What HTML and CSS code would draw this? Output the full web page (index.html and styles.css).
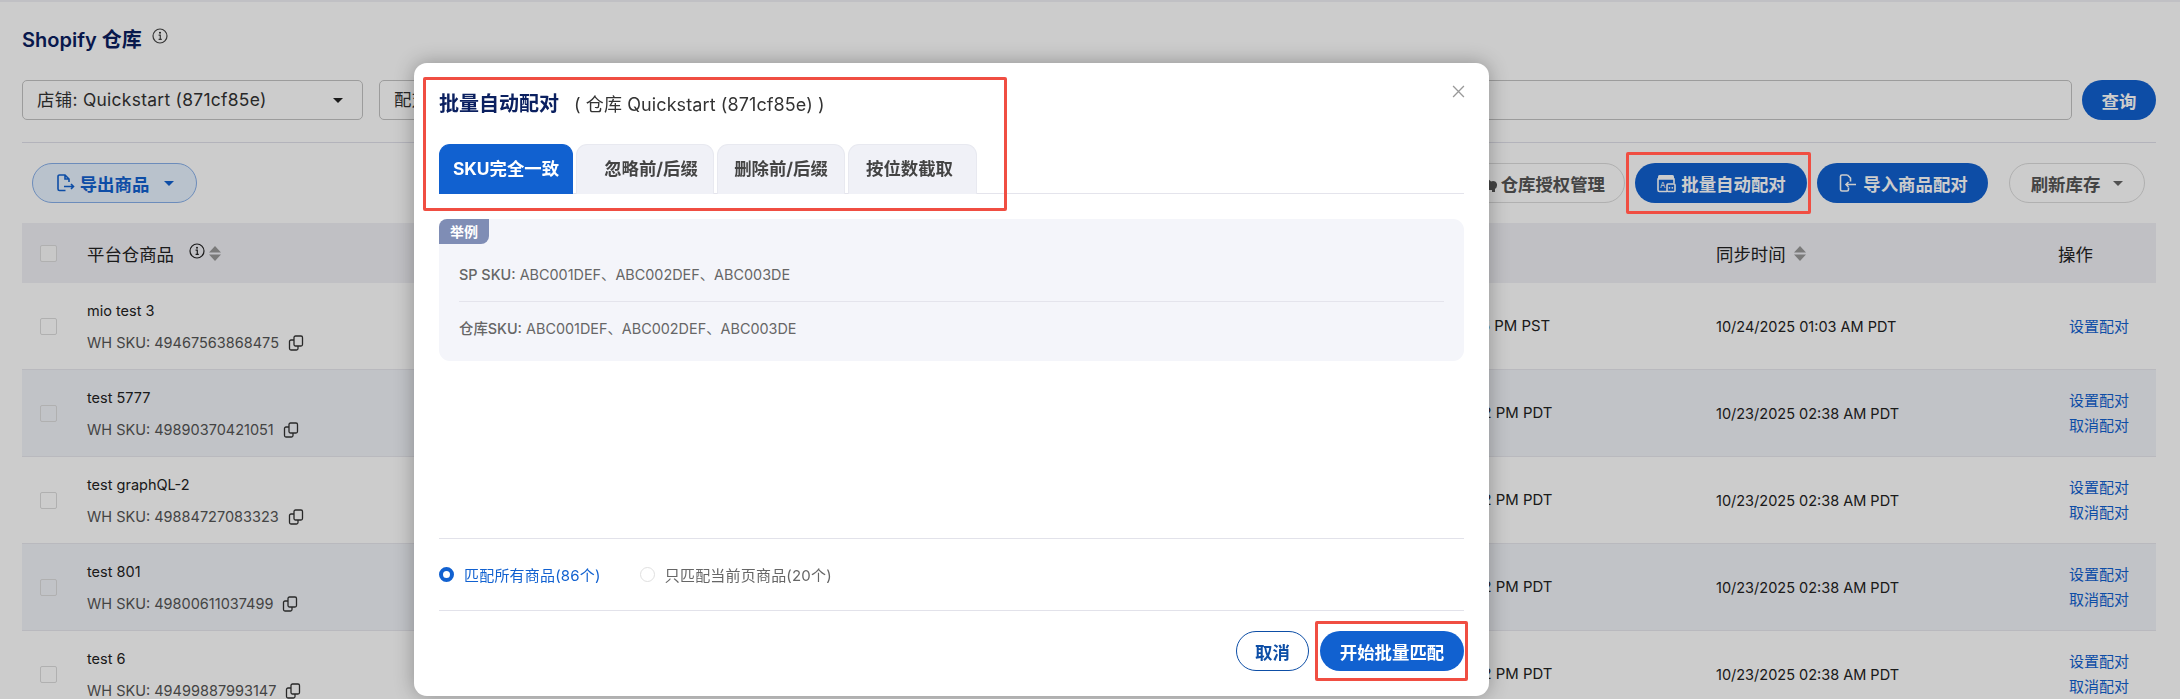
FILE: index.html
```html
<!DOCTYPE html>
<html lang="zh-CN">
<head>
  <meta charset="UTF-8" />
  <title>Shopify 仓库</title>
  <link rel="stylesheet" href="styles.css">
</head>
<body>
  <div class="page">
    <div class="page-title">
      <h1>Shopify 仓库</h1>
      <svg class="info-icon small" viewBox="0 0 16 16"><circle cx="8" cy="8" r="7"/><path d="M6.600 7.200H8.300V11.400M6.600 11.400H9.800"/><circle class="dot" cx="8" cy="4.700" r="1"/></svg>
    </div>

    <div class="filters">
      <div class="select">店铺: Quickstart (871cf85e)<span class="caret dark"></span></div>
      <div class="search">配对状态</div>
      <button class="btn primary query">查询</button>
    </div>

    <div class="actions">
      <button class="btn light export">
        <svg class="btn-icon" viewBox="0 0 20 20"><path d="M10.500 17.500H4.500A1.500 1.500 0 0 1 3 16V3.500A1.500 1.500 0 0 1 4.500 2H10L14 6V9M10 2V6H14M9 13.500H18.500M16 11L18.500 13.500L16 16"/></svg>
        导出商品<span class="caret blue"></span>
      </button>
      <div class="actions-right">
        <button class="btn outline auth">
          <svg class="btn-icon" viewBox="0 0 20 20"><path class="solid" d="M2 17V10L9 4L14 8.500A4 4 0 0 1 20 12.500A4 4 0 0 1 18 16V19H15V17Z"/></svg>
          仓库授权管理
        </button>
        <button class="btn primary batch">
          <svg class="btn-icon" viewBox="0 0 20 20"><path class="solid" d="M2 6V3.500A1.500 1.500 0 0 1 3.500 2H16.500A1.500 1.500 0 0 1 18 3.500V6Z"/><path d="M11 18.500H3.500A1.500 1.500 0 0 1 2 17V6H18V10.500"/><rect x="11" y="11" width="8" height="7.500" rx="1"/><text x="4" y="14.500" class="icon-letter">A</text><circle class="dot" cx="13.500" cy="14.800" r=".9"/><circle class="dot" cx="16.300" cy="14.800" r=".9"/></svg>
          批量自动配对
        </button>
        <button class="btn primary import">
          <svg class="btn-icon" viewBox="0 0 20 20"><path d="M10.500 2H5A1.500 1.500 0 0 0 3.500 3.500V16.500A1.500 1.500 0 0 0 5 18H10A1.500 1.500 0 0 0 11.500 16.500V14.500M10.500 2L13.500 5V8.500M9 11.500H19M11.500 9L9 11.500L11.500 14"/></svg>
          导入商品配对
        </button>
        <button class="btn outline refresh">刷新库存<span class="caret gray"></span></button>
      </div>
    </div>

    <table class="goods">
      <colgroup>
        <col class="col-check"><col class="col-name"><col class="col-created"><col class="col-sync"><col class="col-op">
      </colgroup>
      <thead>
        <tr>
          <th><span class="checkbox"></span></th>
          <th>
            <div class="th-inner">平台仓商品
              <svg class="info-icon" viewBox="0 0 16 16"><circle cx="8" cy="8" r="7"/><path d="M6.600 7.200H8.300V11.400M6.600 11.400H9.800"/><circle class="dot" cx="8" cy="4.700" r="1"/></svg>
              <svg class="sort" viewBox="0 0 12 15"><path d="M6 0L12 6.500H0ZM0 8.500H12L6 15Z"/></svg>
            </div>
          </th>
          <th>创建时间</th>
          <th><div class="th-inner">同步时间<svg class="sort" viewBox="0 0 12 15"><path d="M6 0L12 6.500H0ZM0 8.500H12L6 15Z"/></svg></div></th>
          <th>操作</th>
        </tr>
      </thead>
      <tbody>
        <tr>
          <td><span class="checkbox"></span></td>
          <td>
            <div class="name">mio test 3</div>
            <div class="sku">WH SKU: 49467563868475<svg class="copy" viewBox="0 0 16 16"><use href="#copy-icon"/></svg></div>
          </td>
          <td class="created">10/22/2025 03:15 PM PST</td>
          <td>10/24/2025 01:03 AM PDT</td>
          <td class="ops"><a>设置配对</a></td>
        </tr>
        <tr class="alt">
          <td><span class="checkbox"></span></td>
          <td>
            <div class="name">test 5777</div>
            <div class="sku">WH SKU: 49890370421051<svg class="copy" viewBox="0 0 16 16"><use href="#copy-icon"/></svg></div>
          </td>
          <td class="created">10/22/2025 07:22 PM PDT</td>
          <td>10/23/2025 02:38 AM PDT</td>
          <td class="ops"><a>设置配对</a><a>取消配对</a></td>
        </tr>
        <tr>
          <td><span class="checkbox"></span></td>
          <td>
            <div class="name">test graphQL-2</div>
            <div class="sku">WH SKU: 49884727083323<svg class="copy" viewBox="0 0 16 16"><use href="#copy-icon"/></svg></div>
          </td>
          <td class="created">10/22/2025 07:22 PM PDT</td>
          <td>10/23/2025 02:38 AM PDT</td>
          <td class="ops"><a>设置配对</a><a>取消配对</a></td>
        </tr>
        <tr class="alt">
          <td><span class="checkbox"></span></td>
          <td>
            <div class="name">test 801</div>
            <div class="sku">WH SKU: 49800611037499<svg class="copy" viewBox="0 0 16 16"><use href="#copy-icon"/></svg></div>
          </td>
          <td class="created">10/22/2025 07:22 PM PDT</td>
          <td>10/23/2025 02:38 AM PDT</td>
          <td class="ops"><a>设置配对</a><a>取消配对</a></td>
        </tr>
        <tr>
          <td><span class="checkbox"></span></td>
          <td>
            <div class="name">test 6</div>
            <div class="sku">WH SKU: 49499887993147<svg class="copy" viewBox="0 0 16 16"><use href="#copy-icon"/></svg></div>
          </td>
          <td class="created">10/22/2025 07:22 PM PDT</td>
          <td>10/23/2025 02:38 AM PDT</td>
          <td class="ops"><a>设置配对</a><a>取消配对</a></td>
        </tr>
      </tbody>
    </table>
  </div>

  <svg class="defs" width="0" height="0">
    <symbol id="copy-icon" viewBox="0 0 16 16">
      <path d="M6 2.500A1.500 1.500 0 0 1 7.500 1H13A1.500 1.500 0 0 1 14.500 2.500V9.500A1.500 1.500 0 0 1 13 11H7.500A1.500 1.500 0 0 1 6 9.500Z" />
      <path d="M6 5H3A1.500 1.500 0 0 0 1.500 6.500V13.500A1.500 1.500 0 0 0 3 15H8.500A1.500 1.500 0 0 0 10 13.500V11" />
    </symbol>
  </svg>

  <div class="overlay"></div>

  <div class="modal">
    <svg class="close" viewBox="0 0 12 12"><path d="M1 1L11 11M11 1L1 11"/></svg>
    <div class="modal-title">
      <h2>批量自动配对</h2>
      <span>( 仓库 Quickstart (871cf85e) )</span>
    </div>

    <div class="tabs">
      <div class="tab active">SKU完全一致</div>
      <div class="tab wide">忽略前/后缀</div>
      <div class="tab">删除前/后缀</div>
      <div class="tab last">按位数截取</div>
    </div>

    <div class="example">
      <span class="example-tag">举例</span>
      <div class="example-row"><b>SP SKU:</b> ABC001DEF、ABC002DEF、ABC003DE</div>
      <div class="example-row"><b>仓库SKU:</b> ABC001DEF、ABC002DEF、ABC003DE</div>
    </div>

    <div class="modal-spacer"></div>

    <div class="scope">
      <label class="radio checked"><span class="radio-dot"></span>匹配所有商品(86个)</label>
      <label class="radio"><span class="radio-dot"></span>只匹配当前页商品(20个)</label>
    </div>

    <div class="modal-footer">
      <button class="btn ghost">取消</button>
      <button class="btn start">开始批量匹配</button>
    </div>
  </div>

  <div class="mark mark-head"></div>
  <div class="mark mark-batch"></div>
  <div class="mark mark-start"></div>
</body>
</html>
```

FILE: styles.css
```css
html, body {
  margin: 0;
  padding: 0;
  height: 699px;
  overflow: hidden;
}
body {
  font-family: 'Inter', 'Noto Sans CJK SC', sans-serif;
  font-size: 15px;
  color: #333;
  background-color: #fff;
}
button {
  font-family: inherit;
}
.defs {
  position: absolute;
}

/* page behind the dialog */
.page {
  border-top: 2px solid #f0f0f6;
  padding: 0 24px 0 22px;
}
.page-title {
  display: flex;
  align-items: flex-start;
  height: 78px;
  padding-top: 24px;
  box-sizing: border-box;
}
.page-title h1 {
  margin: 0;
  font-size: 20px;
  line-height: 28px;
  font-weight: 600;
  color: #0b2060;
}
.info-icon {
  width: 16px;
  height: 16px;
  fill: none;
  stroke: #222;
  stroke-width: 1.2;
}
.info-icon.small {
  margin: 2px 0 0 10px;
  stroke: #444;
}
.info-icon .dot {
  fill: #222;
  stroke: none;
}
.filters {
  display: flex;
  align-items: center;
  gap: 16px;
  height: 63px;
  padding-bottom: 22px;
  box-sizing: border-box;
  border-bottom: 1px solid #e0e0ea;
}
.select, .search {
  height: 40px;
  box-sizing: border-box;
  border: 1px solid #c4c4c4;
  border-radius: 5px;
  font-size: 17.4px;
  line-height: 38px;
  padding-left: 14px;
  color: #333;
}
.select {
  width: 341px;
  display: flex;
  align-items: center;
  justify-content: space-between;
  padding-right: 19px;
  letter-spacing: 0.3px;
}
.search {
  flex: 1;
}
.btn {
  height: 40px;
  border-radius: 20px;
  border: 1px solid transparent;
  font-size: 17.4px;
  font-weight: 700;
  display: inline-flex;
  align-items: center;
  justify-content: center;
  gap: 5px;
  padding: 0;
  box-sizing: border-box;
  white-space: nowrap;
}
.btn.primary {
  background-color: #1161d0;
  color: #fff;
}
.btn.query {
  width: 74px;
  margin-left: -6px;
}
.actions {
  display: flex;
  justify-content: space-between;
  align-items: center;
  padding: 20px 11px 20px 10px;
}
.actions-right {
  display: flex;
  gap: 10px;
}
.actions-right .batch {
  width: 172px;
}
.actions-right .import {
  width: 171px;
  gap: 6px;
}
.actions-right .auth {
  width: 180px;
  justify-content: flex-end;
  padding-right: 19px;
  gap: 4px;
}
.actions-right .refresh {
  width: 136px;
  margin-left: 11px;
  gap: 13px;
}
.btn.light {
  width: 165px;
  background-color: #e8f3ff;
  border-color: #88b0ea;
  color: #1161d0;
}
.btn.outline {
  background-color: transparent;
  border-color: #dcdcdc;
  color: #555;
}
.btn-icon {
  width: 20px;
  height: 20px;
  fill: none;
  stroke: currentColor;
  stroke-width: 1.600;
  flex-shrink: 0;
}
.btn-icon .dot, .btn-icon .solid {
  fill: currentColor;
  stroke: none;
}
.icon-letter {
  font-size: 8px;
  font-weight: 400;
  fill: currentColor;
  stroke: none;
}
.caret {
  width: 0;
  height: 0;
  border-left: 5px solid transparent;
  border-right: 5px solid transparent;
  border-top: 5px solid #222;
}
.caret.blue {
  border-top-color: #1161d0;
  margin-left: 10px;
}
.caret.gray {
  border-top-color: #666;
}
.goods {
  width: 100%;
  border-collapse: collapse;
  table-layout: fixed;
}
.col-check { width: 65px; }
.col-name { width: 1280px; }
.col-created { width: 349px; }
.col-sync { width: 342px; }
.goods th {
  height: 60px;
  padding: 0;
  background-color: #f0f0f6;
  font-size: 17.4px;
  font-weight: 400;
  text-align: left;
  color: #222;
}
.goods td {
  height: 86px;
  padding: 0;
  border-bottom: 1px solid #e8e8ee;
  color: #222;
  font-size: 14.500px;
}
.goods td.created {
  font-size: 14.900px;
}
.goods tr.alt td {
  background-color: #f2f4f9;
}
.goods th:first-child, .goods td:first-child {
  padding-left: 18px;
}
.th-inner {
  display: flex;
  align-items: center;
}
.th-inner .info-icon {
  margin: -5px 0 0 15px;
}
.sort {
  width: 12px;
  height: 15px;
  margin-left: 8px;
  fill: #999;
}
.th-inner .info-icon + .sort {
  margin-left: 4px;
}
.checkbox {
  display: block;
  width: 17px;
  height: 17px;
  box-sizing: border-box;
  background-color: transparent;
  border: 1px solid #dcdcdc;
  border-radius: 2px;
}
thead .checkbox {
  background-color: #fbfbfb;
}
.name {
  line-height: 20px;
  margin: 2px 0 12px;
  color: #222;
}
.sku {
  display: flex;
  align-items: center;
  line-height: 20px;
  color: #555;
}
.copy {
  width: 16px;
  height: 16px;
  margin-left: 9px;
  fill: none;
  stroke: #333;
  stroke-width: 1.300;
}
.goods td.ops {
  padding-left: 11px;
}
.ops a {
  display: block;
  line-height: 25px;
  font-size: 15px;
  color: #1161d0;
}

/* dialog */
.overlay {
  position: fixed;
  inset: 0;
  background-color: rgba(0, 0, 0, 0.2);
}
.modal {
  position: absolute;
  left: 414px;
  top: 63px;
  width: 1075px;
  height: 633px;
  box-sizing: border-box;
  padding: 0 25px;
  display: flex;
  flex-direction: column;
  background-color: #fff;
  border-radius: 13px;
  box-shadow: 0 0 20px rgba(0, 0, 0, 0.3);
}
.close {
  position: absolute;
  top: 22px;
  right: 24px;
  width: 13px;
  height: 13px;
  fill: none;
  stroke: #999;
  stroke-width: 1.200;
}
.modal-title {
  display: flex;
  align-items: center;
  height: 81px;
  padding-bottom: 2px;
  box-sizing: border-box;
}
.modal-title h2 {
  margin: 0 15px 0 0;
  font-size: 20px;
  font-weight: 700;
  color: #0b2060;
}
.modal-title span {
  font-size: 18px;
  letter-spacing: 0.1px;
  color: #333;
}
.tabs {
  display: flex;
  gap: 3px;
  height: 49px;
  border-bottom: 1px solid #e4e4ec;
}
.tab {
  width: 128px;
  box-sizing: border-box;
  text-align: center;
  line-height: 48px;
  font-size: 17.400px;
  font-weight: 700;
  color: #444;
  background-color: #f0f1f7;
  border: 1px solid #e8e9f0;
  border-bottom: none;
  border-radius: 11px 11px 0 0;
  margin-bottom: -1px;
}
.tab.active {
  width: 134px;
  color: #fff;
  background-color: #1161d0;
  border-color: #1161d0;
}
.tab.wide {
  width: 138px;
  padding-left: 12px;
}
.tab.last {
  width: 129px;
  padding-right: 6px;
}
.example {
  position: relative;
  margin-top: 25px;
  height: 142px;
  box-sizing: border-box;
  padding: 29px 20px 0;
  background-color: #f4f5fa;
  border-radius: 11px;
}
.example-tag {
  position: absolute;
  left: 0;
  top: 0;
  width: 50px;
  height: 25px;
  line-height: 25px;
  text-align: center;
  font-size: 14px;
  font-weight: 700;
  color: #fff;
  background-color: #7f8db5;
  border-radius: 8px 0 8px 0;
}
.example-row {
  height: 54px;
  line-height: 54px;
  font-size: 14.400px;
  color: #666;
}
.example-row b {
  font-weight: 500;
}
.example-row:first-of-type {
  border-bottom: 1px solid #e4e4ec;
  box-sizing: border-box;
}
.modal-spacer {
  flex: 1;
}
.scope {
  display: flex;
  align-items: center;
  gap: 39px;
  height: 73px;
  box-sizing: border-box;
  border-top: 1px solid #e2e2ea;
  border-bottom: 1px solid #e2e2ea;
}
.radio {
  display: flex;
  align-items: center;
  gap: 10px;
  font-size: 15px;
  letter-spacing: 0.2px;
  color: #666;
}
.radio.checked {
  color: #1161d0;
}
.radio-dot {
  width: 15px;
  height: 15px;
  box-sizing: border-box;
  border: 1px solid #e0e0e0;
  border-radius: 50%;
}
.radio.checked .radio-dot {
  border: 4.500px solid #1161d0;
}
.modal-footer {
  display: flex;
  justify-content: flex-end;
  gap: 11px;
  padding: 20px 0 25px;
}
.btn.ghost {
  width: 73px;
  background-color: #fff;
  border-color: #0d4ea6;
  color: #0d4ea6;
}
.btn.start {
  width: 144px;
  background-color: #1161d0;
  color: #fff;
}

/* red annotation boxes */
.mark {
  position: absolute;
  box-sizing: border-box;
  border: 3px solid #f04e42;
  border-radius: 2px;
}
.mark-head {
  left: 423px;
  top: 77px;
  width: 584px;
  height: 134px;
}
.mark-batch {
  left: 1626px;
  top: 152px;
  width: 185px;
  height: 62px;
}
.mark-start {
  left: 1315px;
  top: 621px;
  width: 153px;
  height: 60px;
}
```
